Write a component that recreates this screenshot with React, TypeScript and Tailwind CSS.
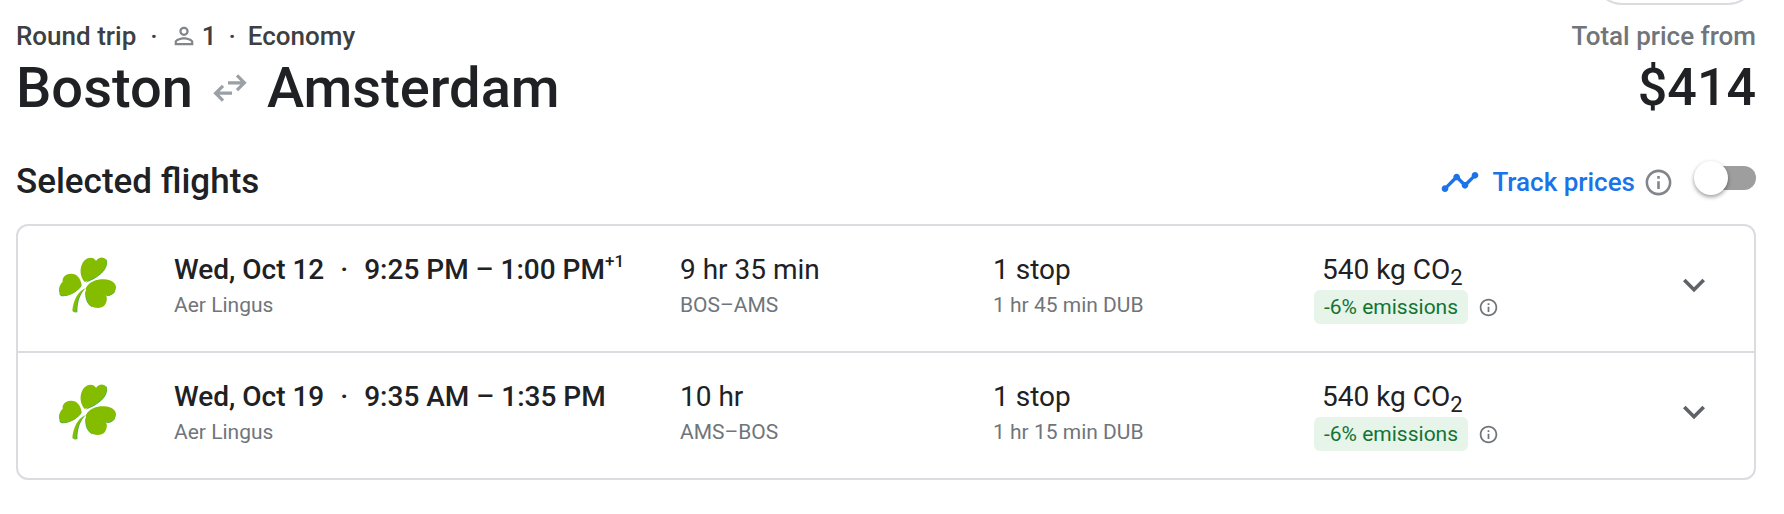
import { MdExpandMore, MdInfoOutline, MdPersonOutline, MdTimeline } from 'react-icons/md'

interface Flight {
  date: string
  time: string
  dayOffset?: string
  airline: string
  duration: string
  route: string
  stops: string
  layover: string
  co2: string
  emissions: string
}

const flights: Flight[] = [
  {
    date: 'Wed, Oct 12',
    time: '9:25 PM – 1:00 PM',
    dayOffset: '+1',
    airline: 'Aer Lingus',
    duration: '9 hr 35 min',
    route: 'BOS–AMS',
    stops: '1 stop',
    layover: '1 hr 45 min DUB',
    co2: '540 kg CO',
    emissions: '-6% emissions',
  },
  {
    date: 'Wed, Oct 19',
    time: '9:35 AM – 1:35 PM',
    airline: 'Aer Lingus',
    duration: '10 hr',
    route: 'AMS–BOS',
    stops: '1 stop',
    layover: '1 hr 15 min DUB',
    co2: '540 kg CO',
    emissions: '-6% emissions',
  },
]

function Shamrock() {
  return (
    <svg viewBox="24 32 180 174" className="h-[58px] w-[60px]" role="img" aria-label="Aer Lingus">
      <g fill="#3fae5a">
        <path d="M107 112C140 100 168 80 171 56C172 50 171 44 168 41L150 70Z" />
        <path d="M96 120C84 138 60 154 38 153C33 153 29 149 28 145L60 130Z" />
        <path d="M109 127C92 142 82 166 82 201L74 201C74 170 84 144 109 127Z" />
        <path d="M106 138C104 162 112 178 126 186L130 150Z" />
        <path d="M196 138C190 148 180 153 169 152L180 130Z" />
      </g>
      <g fill="#84bd00">
        <path d="M104 110C92 96 89 78 94 62C99 46 110 37 122 37C130 37 136 41 138 47C142 41 150 36 158 37C167 38 171 45 170 54C168 76 142 98 104 110Z" />
        <path d="M95 119C92 98 80 84 62 85C46 86 36 96 38 110C32 114 26 126 27 138C28 147 33 151 41 151C62 151 84 138 95 119Z" />
        <path d="M108 127C120 108 142 101 162 102C184 103 198 113 198 126C198 140 184 151 168 150C173 160 170 172 164 180C156 189 142 190 130 186C112 179 105 156 108 127Z" />
        <path d="M106 128C82 140 70 166 67 196C70 200 75 202 79 200C79 170 88 144 106 128Z" />
      </g>
    </svg>
  )
}

function RoundTripArrows() {
  return (
    <svg viewBox="0 0 34 28" className="h-7 w-[34px]" fill="none" stroke="#9aa0a6" strokeWidth="3.2" aria-hidden="true">
      <path d="M15 8.800H31M24 1.400L31.400 8.800L24 16.200" />
      <path d="M19 19.200H3M10 11.800L2.600 19.200L10 26.600" />
    </svg>
  )
}

function FlightRow({ flight }: { flight: Flight }) {
  return (
    <li className="grid grid-cols-[156px_506fr_313fr_321fr_320fr_120px] pt-7 pb-[27px] text-[28px] leading-8">
      <div className="pt-0.5 pl-10">
        <Shamrock />
      </div>
      <div>
        <div className="font-medium whitespace-nowrap">
          {flight.date}
          <span className="px-4">·</span>
          {flight.time}
          {flight.dayOffset && <sup className="-top-3 text-[17px] leading-none">{flight.dayOffset}</sup>}
        </div>
        <div className="mt-[3px] text-[21px] text-[#70757a]">{flight.airline}</div>
      </div>
      <div>
        <div>{flight.duration}</div>
        <div className="mt-[3px] text-[21px] text-[#70757a]">{flight.route}</div>
      </div>
      <div>
        <div>{flight.stops}</div>
        <div className="mt-[3px] text-[21px] text-[#70757a]">{flight.layover}</div>
      </div>
      <div>
        <div className="pl-2">
          {flight.co2}
          <sub className="text-[22px] leading-none">2</sub>
        </div>
        <div className="mt-1 flex items-center gap-2.5 text-[21px]">
          <span className="rounded-md bg-[#e6f4ea] px-[10px] leading-[34px] text-[#137333]">{flight.emissions}</span>
          <button type="button" aria-label="About emissions" className="text-[21px] text-[#70757a]">
            <MdInfoOutline />
          </button>
        </div>
      </div>
      <button
        type="button"
        aria-label="Show flight details"
        className="flex items-center justify-center self-center pb-2 text-[44px] text-[#5f6368]"
      >
        <MdExpandMore />
      </button>
    </li>
  )
}

export default function App() {
  return (
    <main className="bg-white pr-7 pl-4 font-['Roboto','Liberation_Sans',sans-serif] text-[#202124]">
      {/* only the bottom edge of this button shows above the header */}
      <div className="flex h-5 justify-end overflow-hidden">
        <button
          type="button"
          aria-label="Share"
          className="-mt-[51px] h-14 w-[162px] rounded-full border-2 border-[#dadce0]"
        />
      </div>

      <header className="flex justify-between">
        <div>
          <div className="flex items-center text-[26px] leading-8 font-medium text-[#3c4043]">
            Round trip
            <span className="pr-3 pl-3.5">·</span>
            <MdPersonOutline className="mr-1 text-[28px] text-[#80868b]" />
            1
            <span className="px-3">·</span>
            Economy
          </div>
          <h1 className="flex items-center gap-5 text-[56px] leading-[72px] font-medium">
            Boston
            <RoundTripArrows />
            Amsterdam
          </h1>
        </div>
        <div className="text-right">
          <div className="text-[26px] leading-8 font-medium text-[#70757a]">Total price from</div>
          <div className="text-[52px] leading-[72px] font-medium">$414</div>
        </div>
      </header>

      <section>
        <div className="mt-8 flex items-center justify-between">
          <h2 className="text-[35px] leading-[52px] font-medium">Selected flights</h2>
          <div className="flex items-center text-[26px] leading-8 font-medium text-[#1a73e8]">
            <MdTimeline className="mr-3 text-[40px]" />
            <label htmlFor="track-prices">Track prices</label>
            <button type="button" aria-label="About price tracking" className="ml-2 text-[31px] text-[#80868b]">
              <MdInfoOutline />
            </button>
            <span className="mb-2 ml-5 flex h-9 w-[62px] items-center">
              <input
                id="track-prices"
                type="checkbox"
                role="switch"
                className="ml-4 flex h-6 w-[46px] appearance-none items-center rounded-full bg-[#9e9e9e] before:-ml-4 before:size-[34px] before:shrink-0 before:rounded-full before:bg-white before:shadow-[0_2px_4px_rgba(0,0,0,0.4)] checked:bg-[#8ab4f8] checked:before:ml-3"
              />
            </span>
          </div>
        </div>

        <ul className="mt-4 divide-y-2 divide-[#dadce0] rounded-xl border-2 border-[#dadce0]">
          {flights.map((flight) => (
            <FlightRow key={flight.date} flight={flight} />
          ))}
        </ul>
      </section>
    </main>
  )
}
